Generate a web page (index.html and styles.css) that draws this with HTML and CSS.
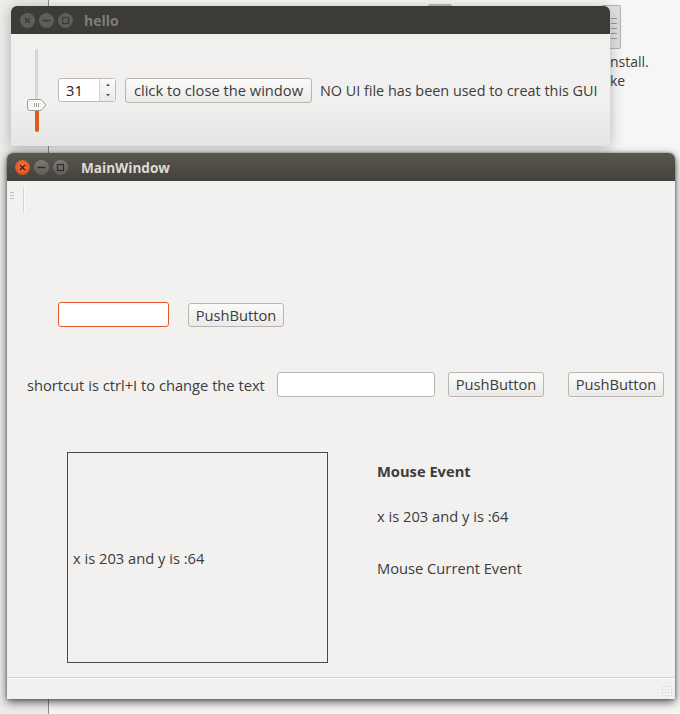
FILE: index.html
```html
<!DOCTYPE html>
<html>
<head>
<meta charset="utf-8">
<link rel="stylesheet" href="styles.css">
</head>
<body>
<div class="desktop">
  <div class="bg-left"></div>
  <div class="bg-line"></div>
  <div class="bg-icon-a"></div>
  <div class="bg-icon-b"><span></span><span></span><span></span><span></span><span></span></div>
  <div class="bg-text"><div class="bg-l1">nstall.</div><div class="bg-l2">ke</div></div>

  <div class="window hello">
    <div class="titlebar inactive">
      <div class="wbtns">
        <span class="wbtn"><svg width="15" height="15" viewBox="0 0 15 15"><path d="M5 5 L10 10 M10 5 L5 10" stroke="#3a3935" stroke-width="1.2"/></svg></span>
        <span class="wbtn"><svg width="15" height="15" viewBox="0 0 15 15"><path d="M3.5 7.5 H11.5" stroke="#3a3935" stroke-width="1.4"/></svg></span>
        <span class="wbtn"><svg width="15" height="15" viewBox="0 0 15 15"><rect x="4.5" y="4.5" width="6" height="6" fill="none" stroke="#3a3935" stroke-width="1.2"/></svg></span>
      </div>
      <div class="title">hello</div>
    </div>
    <div class="hello-body">
      <div class="vslider">
        <div class="track"></div>
        <div class="fill"></div>
        <svg class="handle" width="20" height="12" viewBox="0 0 20 12">
          <path d="M3 0.5 H14 L19 6 L14 11.5 H3 Q0.5 11.5 0.5 9 V3 Q0.5 0.5 3 0.5 Z" fill="#f7f7f6" stroke="#9d9a95"/>
          <path d="M7.5 4 V8 M9.5 4 V8 M11.5 4 V8" stroke="#a5a29d"/>
        </svg>
      </div>
      <div class="spinbox">
        <div class="spin-val">31</div>
        <div class="spin-arrows">
          <svg width="8" height="20" viewBox="0 0 8 20"><path d="M2 6 L4 3.5 L6 6 Z" fill="#555"/><path d="M2 14 L4 16.5 L6 14 Z" fill="#555"/></svg>
        </div>
      </div>
      <div class="btn wide">click to close the window</div>
      <div class="label">NO UI file has been used to creat this GUI</div>
    </div>
  </div>

  <div class="window main">
    <div class="titlebar active">
      <div class="wbtns">
        <span class="wbtn close"><svg width="15" height="15" viewBox="0 0 15 15"><path d="M5 5 L10 10 M10 5 L5 10" stroke="#3c1a0c" stroke-width="1.3"/></svg></span>
        <span class="wbtn dim"><svg width="15" height="15" viewBox="0 0 15 15"><path d="M3.5 7.5 H11.5" stroke="#2e2d2a" stroke-width="1.4"/></svg></span>
        <span class="wbtn dim"><svg width="15" height="15" viewBox="0 0 15 15"><rect x="4.5" y="4.5" width="6" height="6" fill="none" stroke="#2e2d2a" stroke-width="1.2"/></svg></span>
      </div>
      <div class="title">MainWindow</div>
    </div>
    <div class="main-body">
      <div class="toolbar">
        <div class="grip"><span></span><span></span><span></span></div>
        <div class="tsep"></div>
      </div>
      <div class="central">
        <div class="row row1">
          <div class="edit focus e1"></div>
          <div class="btn pb">PushButton</div>
        </div>
        <div class="row row2">
          <div class="label">shortcut is ctrl+I to change the text</div>
          <div class="edit e2"></div>
          <div class="btn pb pb-a">PushButton</div>
          <div class="btn pb pb-b">PushButton</div>
        </div>
        <div class="row row3">
          <div class="frame"><span class="label">x is 203 and y is :64</span></div>
          <div class="events">
            <div class="label bold">Mouse Event</div>
            <div class="label ev2">x is 203 and y is :64</div>
            <div class="label ev3">Mouse Current Event</div>
          </div>
        </div>
      </div>
      <div class="statusbar"><div class="sizegrip"></div></div>
    </div>
  </div>
</div>
</body>
</html>
```

FILE: styles.css
```css
html, body { margin: 0; padding: 0; }
body { font-family: "Open Sans", "Noto Sans", sans-serif; color: #3c3c3c; }

.desktop {
  position: relative;
  width: 680px;
  height: 714px;
  overflow: hidden;
  background: #f6f6f5;
}

.bg-left {
  position: absolute; left: 0; top: 0; width: 48px; height: 714px;
  background: #ececeb;
}
.bg-line {
  position: absolute; left: 48px; top: 0; width: 1px; height: 714px;
  background: #8e8e8e;
}
.bg-icon-a {
  position: absolute; left: 428px; top: 4px; width: 24px; height: 4px;
  background: #bdbdbd; border-radius: 2px 2px 0 0;
}
.bg-icon-b {
  position: absolute; left: 601px; top: 5px; width: 20px; height: 44px;
  background: linear-gradient(90deg, #f2f2f1, #dcdcda);
  border: 1px solid #b4b4b2; border-radius: 2px;
  display: flex; flex-direction: column; align-items: flex-end; gap: 4px;
  padding: 12px 3px 0 0; box-sizing: border-box;
}
.bg-icon-b span { width: 6px; height: 1px; background: #9a9a98; }
.bg-text {
  position: absolute; left: 610px; top: 52px;
  font-size: 14px; line-height: 19px; color: #3c3c3c;
  white-space: nowrap;
  display: flex; flex-direction: column;
}

.window {
  position: absolute;
  background: #f2f1f0;
  border-radius: 6px 6px 0 0;
  display: flex; flex-direction: column;
}
.hello {
  left: 11px; top: 6px; width: 599px; height: 140px;
  box-shadow: 0 2px 14px rgba(0,0,0,0.28);
  background: linear-gradient(#f1f0ee, #f1f0ee 70%, #e6e5e3);
}
.main {
  left: 7px; top: 153px; width: 668px; height: 546px;
  box-shadow: 0 3px 10px rgba(0,0,0,0.65), 0 0 3px rgba(0,0,0,0.4);
}

.titlebar {
  height: 28px; flex: none;
  display: flex; align-items: center;
  border-radius: 6px 6px 0 0;
}
.titlebar.inactive { background: #3c3b37; }
.titlebar.active { background: linear-gradient(#5a5750, #43413c); }
.wbtns { display: flex; gap: 4px; padding-left: 8px; }
.hello .wbtns { padding-left: 9px; gap: 4px; }
.wbtn {
  width: 15px; height: 15px; border-radius: 50%;
  background: #5e5d59; display: flex;
}
.wbtn.dim { background: linear-gradient(#7e7b74, #5e5c57); }
.wbtn.close { background: radial-gradient(circle at 50% 40%, #f77a4a, #e0501d 70%, #c8461b); }
.title {
  font-weight: bold; font-size: 14px;
}
.inactive .title { color: #7f7c75; margin-left: 11px; }
.active .title { color: #dfdbd2; margin-left: 13px; font-size: 13.6px; }

/* hello body */
.hello-body {
  flex: 1; display: flex; align-items: center;
  padding-left: 16px;
}
.vslider { position: relative; width: 20px; height: 83px; flex: none; }
.vslider .track {
  position: absolute; left: 8px; top: 0; width: 3px; height: 83px;
  background: #e2e1df; border: 1px solid #d2d0cd; border-radius: 2px; box-sizing: border-box;
}
.vslider .fill {
  position: absolute; left: 8px; top: 58px; width: 4px; height: 25px;
  background: #e0581f; border-radius: 2px;
}
.vslider .handle { position: absolute; left: 0; top: 50px; }

.spinbox {
  margin-left: 11px;
  width: 58px; height: 24px; box-sizing: border-box;
  border: 1px solid #bdbab5; border-radius: 3px; background: #fff;
  display: flex;
}
.spin-val { flex: 1; font-size: 14.7px; line-height: 22px; padding-left: 7px; color: #222; }
.spin-arrows {
  width: 15px; border-left: 1px solid #d6d4d0;
  background: linear-gradient(#fbfbfa, #ebeae8);
  display: flex; align-items: center; justify-content: center;
}

.btn {
  box-sizing: border-box; height: 25px; flex: none;
  border: 1px solid #b9b6b1; border-radius: 3px;
  background: linear-gradient(#fbfbfa, #ebeae8);
  font-size: 14.7px; line-height: 23px; text-align: center;
  color: #3c3c3c; white-space: nowrap;
}
.btn.wide { width: 187px; margin-left: 9px; }
.label { font-size: 14.7px; white-space: nowrap; color: #3c3c3c; }
.hello-body .label { margin-left: 8px; font-size: 14.4px; }

/* main body */
.main-body { flex: 1; display: flex; flex-direction: column; }
.toolbar { height: 36px; flex: none; display: flex; align-items: center; padding-left: 3px; }
.grip { display: flex; flex-direction: column; gap: 2px; width: 5px; margin-top: -8px; }
.grip span { height: 1px; width: 4px; background: #c3c1bd; }
.tsep { width: 1px; height: 25px; background: #d7d5d1; margin-left: 8px; border-right: 1px solid #fbfbfa; }

.central { flex: 1; }
.row { display: flex; align-items: center; }
.row1 { margin-top: 85px; padding-left: 51px; }
.edit {
  box-sizing: border-box; height: 25px; background: #fff; flex: none;
  border: 1px solid #b9b6b1; border-radius: 3px;
}
.edit.focus { border-color: #e6582a; }
.e1 { width: 111px; }
.row1 .pb { margin-left: 19px; height: 24px; line-height: 22px; }
.pb { width: 96px; }

.row2 { margin-top: 45px; padding-left: 20px; }
.row2 .label { width: 250px; }
.e2 { width: 158px; }
.pb-a { margin-left: 13px; }
.pb-b { margin-left: 24px; }

.row3 { margin-top: 55px; padding-left: 60px; align-items: flex-start; }
.frame {
  width: 261px; height: 211px; box-sizing: border-box; flex: none;
  border: 1px solid #4a4a48;
  display: flex; align-items: center; padding-left: 5px; padding-top: 0;
}
.events { margin-left: 49px; display: flex; flex-direction: column; padding-top: 9px; }
.bold { font-weight: bold; }
.ev2 { margin-top: 25px; }
.ev3 { margin-top: 32px; }

.statusbar {
  height: 21px; flex: none;
  border-top: 1px solid #d5d3cf;
  box-shadow: inset 0 1px 0 #fbfbfa;
  display: flex; justify-content: flex-end; align-items: flex-end;
}
.sizegrip {
  width: 12px; height: 12px; margin: 0 2px 2px 0;
  background-image: radial-gradient(circle, #cfcdc9 0.8px, transparent 1px);
  background-size: 3px 3px;
}
```
